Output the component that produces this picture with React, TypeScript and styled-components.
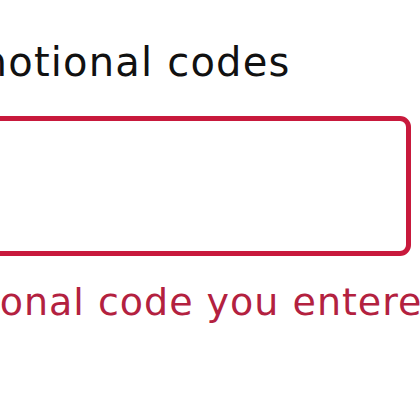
import React from "react";
import styled, { createGlobalStyle } from "styled-components";

const Global = createGlobalStyle`
  html, body { margin: 0; padding: 0; background: #ffffff; }
  body { font-family: "DejaVu Sans", "Open Sans", sans-serif; }
`;

const Page = styled.div`
  width: 420px;
  height: 420px;
  overflow: hidden;
  background: #ffffff;
`;

const Form = styled.div`
  display: flex;
  flex-direction: column;
  padding-top: 40px;
  width: 661px;
  margin-left: -250px;
`;

const Label = styled.label<{ $shift: number }>`
  display: block;
  margin-left: ${(p) => p.$shift}px;
  font-size: 40px;
  line-height: 44px;
  letter-spacing: 1.2px;
  color: #111111;
  white-space: nowrap;
`;

const Input = styled.input`
  box-sizing: border-box;
  margin-top: 32px;
  width: 661px;
  height: 140px;
  border: 5px solid #c8193c;
  border-radius: 11px;
  background: #ffffff;
  outline: none;
  font-family: inherit;
  font-size: 38px;
  padding: 0 20px;
`;

const Error = styled.div<{ $shift: number }>`
  margin-top: 24px;
  margin-left: ${(p) => p.$shift}px;
  font-size: 38px;
  line-height: 44px;
  letter-spacing: 1px;
  color: #b3213f;
  white-space: nowrap;
`;

export default function App() {
  return (
    <Page>
      <Global />
      <Form>
        <Label $shift={151}>Promotional codes</Label>
        <Input aria-label="Promotional code" />
        <Error $shift={8}>The promotional code you entered is not valid.</Error>
      </Form>
    </Page>
  );
}
